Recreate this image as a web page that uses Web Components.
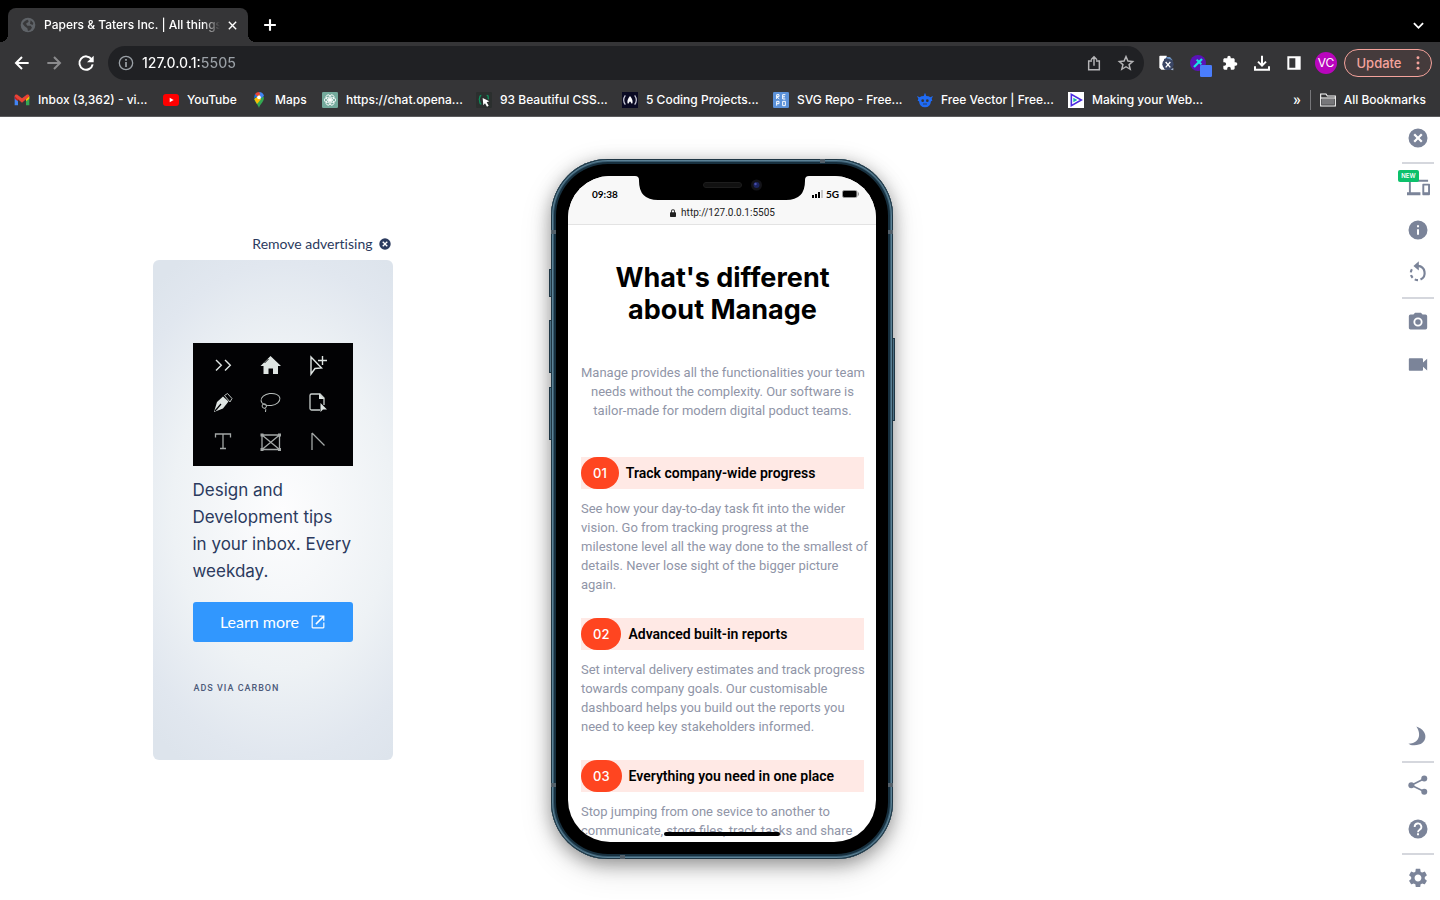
<!DOCTYPE html>
<html lang="en">
<head>
<meta charset="utf-8">
<meta name="viewport" content="width=device-width, initial-scale=1">
<title>Papers &amp; Taters Inc. | All things</title>
<style>
  html, body { margin: 0; }
  body { font-family: Inter, "Liberation Sans", sans-serif; background: #fff; }
</style>
</head>
<body>
<browser-window></browser-window>
<script>
const define = (name, html, init) => {
  const template = document.createElement('template');
  template.innerHTML = html;
  customElements.define(name, class extends HTMLElement {
    constructor() {
      super();
      this.attachShadow({ mode: 'open' }).append(template.content.cloneNode(true));
    }
    connectedCallback() { if (init) init.call(this, this.shadowRoot); }
  });
};

const ICONS = {
  globe: '<circle cx="12" cy="12" r="11" fill="#5f6368"/><path fill="#38383a" d="M4 10c2-4 6-6 8-6l1 3-4 3 2 3 5 0 2 3-3 4-3 1-1-4-4-3zM16 5l4 4-1 3-4-2z"/>',
  x: '<path d="M4 4l16 16M20 4L4 20" fill="none" stroke="currentColor" stroke-width="3"/>',
  plus: '<path d="M12 2v20M2 12h20" fill="none" stroke="currentColor" stroke-width="3.6"/>',
  chevron: '<path d="M2 7l10 10 10-10" fill="none" stroke="currentColor" stroke-width="4"/>',
  back: '<path d="M22 12H4M12 3l-9 9 9 9" fill="none" stroke="currentColor" stroke-width="3"/>',
  forward: '<path d="M2 12h18M12 3l9 9-9 9" fill="none" stroke="currentColor" stroke-width="3"/>',
  reload: '<path d="M20.500 6.500A10 10 0 1 0 22 14" fill="none" stroke="currentColor" stroke-width="3"/><path fill="currentColor" d="M23.500 1v10H13.500z"/>',
  siteinfo: '<circle cx="12" cy="12" r="10" fill="none" stroke="currentColor" stroke-width="2"/><path fill="currentColor" d="M10.700 10.500h2.600V18h-2.600zM10.700 6h2.600v2.600h-2.600z"/>',
  upload: '<path d="M9 9H4v13h16V9h-5M12 16V3M7.500 7L12 2.500 16.500 7" fill="none" stroke="currentColor" stroke-width="2.200"/>',
  star: '<path d="M12 2.500l2.900 6.600 7.100.6-5.400 4.700 1.700 7L12 17.600 5.700 21.400l1.700-7L2 9.700l7.100-.6z" fill="none" stroke="currentColor" stroke-width="2.200"/>',
  docx: '<path fill="#fff" d="M3 1h10v21H5l-3-3V2z"/><path fill="#6c93c4" d="M12 3l6 0 4 5-3 2h-8z"/><path fill="#3a4665" d="M9 6l5-2v3l7 1v14H10z"/><circle cx="15" cy="14" r="8.500" fill="#3a4665"/><path fill="#9fb0cc" d="M19 22l4-3v4z"/><path d="M11.500 10.500l7 8M18.500 10.500l-7 8" stroke="#fff" stroke-width="2"/>',
  picker: '<circle cx="12" cy="12" r="12" fill="#5a12b8"/><path d="M6 18L18 6" stroke="#19e3e3" stroke-width="3.500"/><path d="M10 7l7 7" stroke="#19e3e3" stroke-width="3"/><rect x="15" y="15" width="18" height="18" rx="2" fill="#4a7dfb"/>',
  puzzle: '<path fill="currentColor" d="M20.500 11H19V7c0-1.100-.9-2-2-2h-4V3.500a2.500 2.500 0 0 0-5 0V5H4c-1.100 0-2 .9-2 2v3.800h1.500a2.700 2.700 0 0 1 0 5.400H2V20c0 1.100.9 2 2 2h3.800v-1.500a2.700 2.700 0 0 1 5.400 0V22H17c1.100 0 2-.9 2-2v-4h1.500a2.500 2.500 0 0 0 0-5z"/>',
  download: '<path d="M12 1v15M6 10l6 6 6-6M1.500 17v5h21v-5" fill="none" stroke="currentColor" stroke-width="3"/>',
  panel: '<path fill="currentColor" d="M2 2h20v20H2zM5 5v14h9V5z" fill-rule="evenodd"/>',
  dots: '<circle cx="12" cy="4" r="2.200" fill="currentColor"/><circle cx="12" cy="12" r="2.200" fill="currentColor"/><circle cx="12" cy="20" r="2.200" fill="currentColor"/>',
  gmail: '<path fill="#4285f4" d="M1 6v14h5V10z"/><path fill="#34a853" d="M23 6v14h-5V10z"/><path fill="#c5221f" d="M1 6l5 4v4l-5-4z"/><path fill="#fbbc04" d="M23 6l-5 4v4l5-4z"/><path fill="#ea4335" d="M1 6.500C1 4 3.500 3 5.500 4.500L12 9.500l6.500-5C20.500 3 23 4 23 6.500L18 11l-6 5-6-5z"/>',
  youtube: '<rect x="0" y="3" width="24" height="18" rx="4.500" fill="#f00"/><path d="M10 8.500v7l6-3.500z" fill="#fff"/>',
  maps: '<path fill="#34a853" d="M12 24c-1-5-7-8-7-15l14-2c2 7-6 11-7 17z"/><path fill="#fbbc04" d="M5 11l9-9 1 9-6 7z"/><path fill="#4285f4" d="M12 0a8 8 0 0 1 7.500 6L14 10z"/><path fill="#ea4335" d="M6 3a8 8 0 0 1 6-3l2 3-6 5z"/><path fill="#1a73e8" d="M6 3L4.500 9 10 7z"/><circle cx="12" cy="8" r="2.800" fill="#fff"/>',
  gpt: '<rect width="24" height="24" rx="2" fill="#74aa9c"/><g fill="none" stroke="#fff" stroke-width="1.300"><ellipse cx="12" cy="8" rx="3.500" ry="4.500" transform="rotate(30 12 12)"/><ellipse cx="12" cy="8" rx="3.500" ry="4.500" transform="rotate(90 12 12)"/><ellipse cx="12" cy="8" rx="3.500" ry="4.500" transform="rotate(150 12 12)"/><ellipse cx="12" cy="8" rx="3.500" ry="4.500" transform="rotate(210 12 12)"/><ellipse cx="12" cy="8" rx="3.500" ry="4.500" transform="rotate(270 12 12)"/><ellipse cx="12" cy="8" rx="3.500" ry="4.500" transform="rotate(330 12 12)"/></g>',
  cursor: '<rect width="24" height="24" rx="2" fill="#2b2f2e"/><path d="M8 5c-4 0-1 6-4 6 3 0 0 7 4 7M16 5c4 0 1 4 3 6" fill="none" stroke="#0f8f5c" stroke-width="2"/><path fill="#fff" d="M10 9l10 5-4 1.500 3 5-2.500 1.500-3-5-2.500 3z"/>',
  fcc: '<rect width="24" height="24" fill="#0a0a23"/><path d="M5 5q-5 7 0 14M19 5q5 7 0 14" fill="none" stroke="#c9c9d8" stroke-width="1.800"/><path d="M12 6q6 7 3 12l-3-4-3 4q-3-5 3-12z" fill="#fff"/>',
  repo: '<rect width="24" height="24" rx="2" fill="#5b91d8"/><g fill="none" stroke="#fff" stroke-width="1.500"><path d="M5.500 10.500V4H9v3H5.500l4 3.500M18.500 4h-4v6.500h4M14.500 7.200h3.500M5.500 20.500V14H9v3.500H5.500M14.500 14h4v6.500h-4z"/></g>',
  freepik: '<path fill="#1f6bf5" d="M12 1l2 5q4 0 6 2l4-2-2 4 1 3-2 1q-1 9-9 9t-9-9l-2-1 1-3-2-4 4 2q2-2 6-2z"/><circle cx="8.500" cy="13" r="2" fill="#353537"/><circle cx="15.500" cy="13" r="2" fill="#353537"/><path d="M9 18h6" stroke="#353537" stroke-width="1.200"/>',
  play: '<rect width="24" height="24" fill="#fff"/><path d="M5 3.500v17L20 12z" fill="none" stroke="#4b2be0" stroke-width="2.400"/><path d="M8 8.500v7l6-3.500z" fill="#19b8a8"/>',
  folder: '<path d="M1 21V3h8l2 3h12v15z" fill="none" stroke="currentColor" stroke-width="1.600"/><path fill="#77777a" d="M3 10h18v9H3z"/><path d="M1 9h22" stroke="currentColor" stroke-width="1.600"/>',
  closeCircle: '<path fill="currentColor" d="M12 .6a11.400 11.400 0 1 0 0 22.800 11.400 11.400 0 0 0 0-22.800zm5.500 15L15.600 17.500 12 13.900 8.400 17.500 6.500 15.600 10.100 12 6.500 8.400 8.400 6.500 12 10.100 15.600 6.500 17.500 8.400 13.900 12z"/>',
  devices: '<path fill="currentColor" d="M4 6h18V4H4c-1.100 0-2 .9-2 2v11H0v3h14v-3H4V6zm19 2h-6c-.6 0-1 .5-1 1v10c0 .6.500 1 1 1h6c.6 0 1-.4 1-1V9c0-.5-.4-1-1-1zm-1 9h-4v-7h4v7z"/>',
  info: '<path fill="currentColor" d="M12 .6a11.400 11.400 0 1 0 0 22.800 11.400 11.400 0 0 0 0-22.800zm1.200 17h-2.400V11h2.400v6.600zm0-8.800h-2.400V6.400h2.400v2.400z"/>',
  rotate: '<path d="M11 3.500h1a8.500 8.500 0 0 1 3 16.200" fill="none" stroke="currentColor" stroke-width="2.600"/><path d="M12 20.500A8.500 8.500 0 0 1 5 7" fill="none" stroke="currentColor" stroke-width="2.600" stroke-dasharray="4 3"/><path fill="currentColor" d="M13 -2v11L6.500 3.500z"/>',
  camera: '<path fill="currentColor" d="M8.500 1L6.500 3H3a2 2 0 0 0-2 2v14c0 1.100.9 2 2 2h18a2 2 0 0 0 2-2V5a2 2 0 0 0-2-2h-3.500l-2-2z"/><circle cx="12" cy="12" r="4.400" fill="none" stroke="#fff" stroke-width="2.200"/>',
  video: '<path fill="currentColor" d="M18 9V5c0-.6-.5-1-1-1H2c-.6 0-1 .4-1 1v13c0 .6.400 1 1 1h15c.6 0 1-.4 1-1v-4l5 4.500v-14z"/>',
  moon: '<path fill="currentColor" d="M10 -.5c16 5 14 23-3 22.500-3 0-5-1-6.500-2 13 0 16-11 9.500-20.500z"/>',
  share: '<path d="M20 3L4 11l16 8" fill="none" stroke="currentColor" stroke-width="2"/><circle cx="19.500" cy="3" r="3.600" fill="currentColor"/><circle cx="4" cy="11" r="3.600" fill="currentColor"/><circle cx="19.500" cy="19" r="3.600" fill="currentColor"/>',
  help: '<circle cx="12" cy="12" r="11.400" fill="currentColor"/><path d="M8 9.500a4 4 0 1 1 6 3.300c-1.500 1-2 1.500-2 3" fill="none" stroke="#fff" stroke-width="2.200"/><path fill="#fff" d="M10.800 17.200h2.400v2.400h-2.400z"/>',
  gear: '<path transform="translate(-1.700 -1.700) scale(1.140)" fill="currentColor" d="M19.140 12.940c.04-.3.060-.61.060-.94 0-.32-.02-.64-.07-.94l2.030-1.580c.18-.14.230-.41.120-.61l-1.920-3.320c-.12-.22-.37-.29-.59-.22l-2.390.96c-.5-.38-1.030-.7-1.620-.94l-.36-2.540c-.04-.24-.24-.41-.48-.41h-3.840c-.24 0-.43.170-.47.410l-.36 2.540c-.59.240-1.130.570-1.620.940l-2.390-.96c-.22-.08-.47 0-.59.220L2.740 8.870c-.12.210-.08.470.12.610l2.030 1.580c-.05.300-.09.630-.09.940s.02.640.070.940l-2.030 1.580c-.18.140-.23.410-.12.610l1.920 3.320c.12.220.370.290.590.220l2.390-.96c.500.380 1.030.700 1.620.940l.36 2.540c.050.240.240.410.480.410h3.840c.24 0 .44-.17.470-.41l.36-2.540c.59-.24 1.130-.56 1.620-.94l2.390.96c.22.080.470 0 .59-.22l1.920-3.320c.12-.22.070-.47-.12-.61l-2.010-1.580zM12 15.600c-1.980 0-3.600-1.620-3.600-3.600s1.620-3.600 3.600-3.600 3.600 1.620 3.600 3.600-1.620 3.600-3.600 3.600z"/>',
  external: '<path fill="currentColor" d="M21 21H3V3h8V1H3a2 2 0 0 0-2 2v18c0 1.100.9 2 2 2h18a2 2 0 0 0 2-2v-8h-2v8zM14 1v2.200h5L7.500 14.700l1.800 1.800L20.800 5v5H23V1z"/>',
  lock: '<path fill="currentColor" d="M19 10h-1V7A6 6 0 0 0 6 7v3H5a2 2 0 0 0-2 2v10c0 1.100.9 2 2 2h14a2 2 0 0 0 2-2V12a2 2 0 0 0-2-2zM8.500 10V7a3.500 3.500 0 0 1 7 0v3z"/>'
};

define('ui-icon', `
<style>
  :host { display: inline-flex; flex: none; width: var(--icon-size, 16px); height: var(--icon-size, 16px); }
  svg { display: block; width: 100%; height: 100%; overflow: visible; }
</style>
<svg viewBox="0 0 24 24" aria-hidden="true"></svg>`, function (root) {
  root.querySelector('svg').innerHTML = ICONS[this.getAttribute('name')] || '';
});

define('tab-strip', `
<style>
  :host { display: flex; align-items: flex-end; height: 42px; padding: 0 14px 0 8px; box-sizing: border-box; background: #000; color: #fff; }
  .tab { position: relative; display: flex; align-items: center; gap: 8px; box-sizing: border-box; width: 240px; height: 34px; padding: 0 8px 0 12px; background: #353537; border-radius: 8px 8px 0 0; }
  .tab::before, .tab::after { content: ""; position: absolute; bottom: 0; width: 8px; height: 8px; }
  .tab::before { right: 100%; background: radial-gradient(circle at 0 0, #000 8px, #353537 8px); }
  .tab::after { left: 100%; background: radial-gradient(circle at 100% 0, #000 8px, #353537 8px); }
  .title { flex: 1; min-width: 0; overflow: hidden; white-space: nowrap; font: 500 12px/18px Inter, sans-serif; -webkit-mask-image: linear-gradient(90deg, #000 90%, transparent); mask-image: linear-gradient(90deg, #000 90%, transparent); }
  button { display: flex; align-items: center; justify-content: center; width: 16px; height: 34px; padding: 0; border: 0; background: none; color: #fff; }
  .close { --icon-size: 11px; margin-left: -4px; }
  .new { margin-left: 14px; --icon-size: 14px; }
  .list { margin-left: auto; --icon-size: 11px; }
</style>
<div class="tab"><ui-icon name="globe"></ui-icon><span class="title"><slot></slot></span><button class="close" aria-label="Close tab"><ui-icon name="x"></ui-icon></button></div>
<button class="new" aria-label="New tab"><ui-icon name="plus"></ui-icon></button>
<button class="list" aria-label="Search tabs"><ui-icon name="chevron"></ui-icon></button>`);

define('address-bar', `
<style>
  :host { display: flex; align-items: center; height: 42px; padding: 0 8px; box-sizing: border-box; background: #353537; color: #fff; }
  nav, .actions { display: flex; align-items: center; flex: none; }
  nav button, .actions button { display: flex; align-items: center; justify-content: center; padding: 0; border: 0; background: none; color: inherit; width: 32px; height: 32px; }
  nav { margin-left: -2px; margin-right: 6px; }
  .dim { color: #8b8b8d; }
  form { flex: 1; min-width: 0; display: flex; align-items: center; gap: 8px; height: 34px; padding: 0 10px; border-radius: 17px; background: #202124; color: #9aa0a6; }
  form button { display: flex; padding: 0; border: 0; background: none; color: #b5b5b7; }
  form button + button { margin-left: 8px; }
  input { flex: 1; min-width: 0; padding: 0; border: 0; outline: 0; font: 500 14px/20px Inter, sans-serif; background: linear-gradient(90deg, #fff 58px, #9aa0a6 58px); -webkit-background-clip: text; background-clip: text; color: transparent; }
  .actions { margin-left: 6px; }
  .avatar { width: 22px; height: 22px; margin: 0 7px 0 5px; border-radius: 50%; background: #b905bd; text-align: center; font: 400 12px/22px Inter, sans-serif; }
  .actions .update { width: 88px; height: 28px; border: 1px solid #f5a39c; border-radius: 14px; background: #453b3c; color: #f5a39c; gap: 8px; font: 500 13px/20px Inter, sans-serif; padding-left: 6px; }
</style>
<nav aria-label="History">
  <button aria-label="Back"><ui-icon name="back"></ui-icon></button>
  <button class="dim" aria-label="Forward"><ui-icon name="forward"></ui-icon></button>
  <button aria-label="Reload"><ui-icon name="reload"></ui-icon></button>
</nav>
<form onsubmit="return false">
  <ui-icon name="siteinfo"></ui-icon>
  <input type="text" aria-label="Address" value="127.0.0.1:5505">
  <button type="button" aria-label="Share page"><ui-icon name="upload"></ui-icon></button>
  <button type="button" aria-label="Bookmark page"><ui-icon name="star"></ui-icon></button>
</form>
<div class="actions">
  <button aria-label="Inspector"><ui-icon name="docx"></ui-icon></button>
  <button aria-label="Color picker"><ui-icon name="picker"></ui-icon></button>
  <button aria-label="Extensions"><ui-icon name="puzzle"></ui-icon></button>
  <button aria-label="Downloads"><ui-icon name="download"></ui-icon></button>
  <button aria-label="Side panel"><ui-icon name="panel"></ui-icon></button>
  <span class="avatar">VC</span>
  <button class="update">Update <ui-icon name="dots"></ui-icon></button>
</div>`);

define('bookmark-link', `
<style>
  :host { display: block; min-width: 0; }
  a { display: flex; align-items: center; gap: 8px; color: #fff; text-decoration: none; white-space: nowrap; font: 500 12px/20px Inter, sans-serif; }
</style>
<a href="#"><ui-icon></ui-icon><span><slot></slot></span></a>`, function (root) {
  const icon = document.createElement('ui-icon');
  icon.setAttribute('name', this.getAttribute('icon'));
  root.querySelector('ui-icon').replaceWith(icon);
});

define('bookmark-bar', `
<style>
  :host { display: flex; align-items: center; justify-content: space-between; box-sizing: border-box; height: 33px; padding: 0 14px; background: #353537; border-bottom: 1px solid #5b5b5d; color: #fff; }
  nav { display: grid; grid-template-columns: 149px 88px 71px 154px 146px 151px 144px 151px auto; }
  .more { display: flex; align-items: center; }
  button { padding: 0 9px; border: 0; background: none; color: #fff; font: 500 16px/20px Roboto, sans-serif; }
  .all { border-left: 1px solid #77777a; padding-left: 9px; }
</style>
<nav aria-label="Bookmarks">
  <bookmark-link icon="gmail">Inbox (3,362) - vi...</bookmark-link>
  <bookmark-link icon="youtube">YouTube</bookmark-link>
  <bookmark-link icon="maps">Maps</bookmark-link>
  <bookmark-link icon="gpt">https://chat.opena...</bookmark-link>
  <bookmark-link icon="cursor">93 Beautiful CSS...</bookmark-link>
  <bookmark-link icon="fcc">5 Coding Projects...</bookmark-link>
  <bookmark-link icon="repo">SVG Repo - Free...</bookmark-link>
  <bookmark-link icon="freepik">Free Vector | Free...</bookmark-link>
  <bookmark-link icon="play">Making your Web...</bookmark-link>
</nav>
<div class="more"><button aria-label="More bookmarks">»</button><bookmark-link class="all" icon="folder">All Bookmarks</bookmark-link></div>`);

define('ad-panel', `
<style>
  :host { display: flex; flex-direction: column; gap: 6px; width: 240px; color: #2b3a5e; }
  .remove { display: flex; align-items: center; justify-content: flex-end; gap: 6px; padding: 0 2px 0 0; border: 0; background: none; color: inherit; font: 400 14px/20px Lato, sans-serif; font-variant-ligatures: none; --icon-size: 12px; }
  article { box-sizing: border-box; height: 500px; padding: 83px 40px 0; border-radius: 6px; background: radial-gradient(ellipse 200px 290px at 54% 50%, #fdfdfe 0%, #eef2f5 55%, #e1e7ef 85%, #dde4ec 100%); }
  .art { display: block; width: 100%; background: #020204; }
  p { margin: 11px 0 17px; font: 400 17px/27px Inter, sans-serif; white-space: nowrap; }
  .cta { display: flex; align-items: center; justify-content: center; gap: 12px; height: 40px; border-radius: 3px; background: #3197fe; color: #fff; text-decoration: none; font: 400 16px/20px Lato, sans-serif; --icon-size: 14px; }
  small { display: block; margin-top: 36px; padding-left: 1px; font: 500 9px/20px Roboto, sans-serif; letter-spacing: 1px; color: #4d5a7a; }
</style>
<button class="remove">Remove advertising <ui-icon name="closeCircle"></ui-icon></button>
<article>
  <svg class="art" viewBox="0 0 160 123" role="img" aria-label="Design tool icons">
    <g fill="none" stroke="#dfe5e3" stroke-width="1.400">
      <path d="M23 17l5.300 5.300L23 27.600M32 17l5.300 5.300L32 27.600"/>
      <path d="M118 14v17l4-5.500 6.500-.5zM129.500 13v9M125 17.500h9"/>
    </g>
    <path fill="#dfe5e3" d="M77.500 13l10.500 10h-3v8h-5v-5.500h-4.500V31h-5v-8h-3z"/>
    <path d="M71.500 20l4-4" stroke="#020204" stroke-width="1"/>
    <path fill="#dfe5e3" d="M21 69l3-10 6-5.500 5.500 5-5.500 7z"/><path d="M22 68l6-7" stroke="#020204" stroke-width="1.200"/>
    <path d="M31.500 52.500l3-2 4.500 5-2 3.500z" fill="none" stroke="#b9bfbd"/>
    <g fill="none" stroke="#b9bfbd"><ellipse cx="77.500" cy="56.500" rx="9.500" ry="6" transform="rotate(-8 77.500 56.500)"/><circle cx="71.300" cy="63" r="2.200"/><path d="M71.500 65q2 1 1 4"/></g>
    <path d="M127 67h-8.500q-1.500 0-1.500-1.500v-13q0-1.500 1.500-1.500h8.500l4 4v7" fill="none" stroke="#c9cfcd" stroke-width="1.300"/>
    <path fill="#dfe5e3" d="M126 50.500v5.500h5.500zM127.500 60v9l2.500-2.500h4z"/>
    <g fill="none" stroke="#a4a8a7" stroke-width="1.300"><path d="M22.500 94.500V91h15v3.500M30 91v14.500M27 105.500h6"/><path d="M69 92h17.500v14.500H69zM69 92l17.500 14.500M86.500 92L69 106.500"/><path d="M119 90v17M119 90l12.500 12.500"/></g>
    <g fill="#a4a8a7"><path d="M67.500 90.500h3v3h-3zM85 90.500h3v3h-3zM67.500 105h3v3h-3zM85 105h3v3h-3z"/></g>
  </svg>
  <p>Design and<br>Development tips<br>in your inbox. Every<br>weekday.</p>
  <a class="cta" href="#">Learn more <ui-icon name="external"></ui-icon></a>
  <small>ADS VIA CARBON</small>
</article>`);

define('feature-item', `
<style>
  :host { display: block; margin-bottom: 24px; }
  h2 { display: flex; align-items: center; gap: 7px; margin: 0 0 10px; background: #ffe9e5; color: #000; font: 600 14px/32px Roboto, sans-serif; white-space: nowrap; }
  .n { padding: 0 12px; border-radius: 16px; background: #ff4520; color: #fff; text-align: center; font: 500 13px/32px Inter, sans-serif; }
  p { margin: 0; font: 400 13px/19px Roboto, sans-serif; color: #9095a7; white-space: nowrap; }
</style>
<h2><span class="n"></span><span class="t"></span></h2><p><slot></slot></p>`, function (root) {
  root.querySelector('.n').textContent = this.getAttribute('number');
  root.querySelector('.t').textContent = this.getAttribute('heading');
});

define('phone-frame', `
<style>
  :host { position: relative; display: block; box-sizing: border-box; width: 342px; height: 700px; padding: 17px; border-radius: 57px; background: #000;
    box-shadow: inset 0 0 0 1px #1f3644, inset 0 0 0 2px #5c8296, inset 0 0 0 3px #3a5c70, inset 0 0 0 5px #17303f, 0 5px 18px rgba(0,0,0,.38), 0 10px 34px rgba(0,0,0,.12); }
  .screen { position: relative; height: 666px; overflow: hidden; border-radius: 42px; background: #fff; }
  header { box-sizing: border-box; height: 49px; padding-top: 9px; background: #f8f8f8; border-bottom: 1px solid #e3e3e3; color: #000; }
  .status { display: flex; justify-content: space-between; padding: 0 17px 0 24px; font: 700 10px/18px Lato, sans-serif; }
  .net { display: flex; align-items: center; gap: 3px; }
  .net svg { display: block; }
  .url { display: flex; justify-content: center; align-items: center; gap: 4px; font: 400 10px/20px Roboto, sans-serif; color: #222; --icon-size: 8px; }
  .notch { position: absolute; top: 0; left: 71px; width: 166px; height: 24px; display: block; overflow: visible; }
  .home { position: absolute; left: 96px; bottom: 6px; width: 116px; height: 4px; border-radius: 2px; background: #000; }
  .page { padding: 37px 12px 0 13px; }
  i { position: absolute; background: #4b7084; border: 1px solid #1f3644; box-sizing: border-box; width: 3px; }
  b { position: absolute; background: #53606a; width: 5px; height: 4px; }
</style>
<i style="left:-2px;top:110px;height:28px"></i><i style="left:-2px;top:161px;height:53px"></i><i style="left:-2px;top:228px;height:53px"></i><i style="right:-2px;top:179px;height:83px"></i>
<b style="left:0;top:71px"></b><b style="right:0;top:71px"></b><b style="left:0;top:624px"></b><b style="right:0;top:624px"></b><b style="left:269px;top:0"></b><b style="left:69px;bottom:0"></b>
<div class="screen">
  <header>
    <div class="status"><span>09:38</span><span class="net">
      <svg width="11" height="8" viewBox="0 0 11 8" aria-hidden="true"><path d="M0 5h2v3H0zM3 4h2v4H3zM6 2h2v6H6z"/><path fill="#c9c9c9" d="M9 0h2v8H9z"/></svg>
      <span>5G</span>
      <svg width="17" height="8" viewBox="0 0 17 8" aria-hidden="true"><rect x=".5" y=".5" width="14.500" height="7" rx="1.500" fill="none" stroke="#999"/><rect x="1" y="1" width="13.500" height="6" rx="1"/><path fill="#999" d="M16 2.500h1v3h-1z"/></svg>
    </span></div>
    <div class="url"><ui-icon name="lock"></ui-icon><span>http://127.0.0.1:5505</span></div>
  </header>
  <div class="page"><slot></slot></div>
  <svg class="notch" viewBox="0 0 166 24" aria-hidden="true"><path d="M-4 0Q0 0 0 4v1q0 19 19 19h128q19 0 19-19V4q0-4 4-4z"/><rect x="64.500" y="6.500" width="38" height="5" rx="2.500" fill="#111" stroke="#1d1d1d"/><circle cx="117.500" cy="9" r="5.500" fill="#131318"/><circle cx="117.500" cy="9" r="3" fill="#1c2560"/><circle cx="116.500" cy="8" r="1.200" fill="#4a4fae"/></svg>
  <div class="home"></div>
</div>`);

define('manage-page', `
<style>
  :host { display: block; }
  h1 { margin: 0 0 37px; text-align: center; font: 700 27px/32px Inter, sans-serif; color: #000; }
  .intro { margin: 0 0 37px; text-align: center; font: 400 13px/19px Roboto, sans-serif; color: #9095a7; white-space: nowrap; }
</style>
<h1>What's different<br>about Manage</h1>
<p class="intro">Manage provides all the functionalities your team<br>needs without the complexity. Our software is<br>tailor-made for modern digital poduct teams.</p>
<feature-item number="01" heading="Track company-wide progress">See how your day-to-day task fit into the wider<br>vision. Go from tracking progress at the<br>milestone level all the way done to the smallest of<br>details. Never lose sight of the bigger picture<br>again.</feature-item>
<feature-item number="02" heading="Advanced built-in reports">Set interval delivery estimates and track progress<br>towards company goals. Our customisable<br>dashboard helps you build out the reports you<br>need to keep key stakeholders informed.</feature-item>
<feature-item number="03" heading="Everything you need in one place">Stop jumping from one sevice to another to<br>communicate, store files, track tasks and share</feature-item>`);

define('tool-rail', `
<style>
  :host { display: flex; flex-direction: column; justify-content: space-between; box-sizing: border-box; width: 44px; padding: 11px 6px 12px; --icon-size: 20px; color: #7b8499; }
  div { display: flex; flex-direction: column; align-items: center; }
  button { position: relative; display: flex; padding: 0; border: 0; background: none; color: inherit; }
  button + button { margin-top: 23px; }
  hr { width: 100%; height: 2px; margin: 14px 0 13px; border: 0; background: #d5d7dd; }
  .devices { --icon-size: 23px; height: 20px; align-items: center; }
  .badge { position: absolute; right: 11px; top: -7px; padding: 0 3px; border-radius: 2px; background: #0cc16b; color: #fff; font: 600 6px/12px Inter, sans-serif; }
</style>
<div>
  <button aria-label="Close"><ui-icon name="closeCircle"></ui-icon></button><hr>
  <button class="devices" aria-label="Devices"><ui-icon name="devices"></ui-icon><span class="badge">NEW</span></button>
  <button aria-label="Information"><ui-icon name="info"></ui-icon></button>
  <button aria-label="Rotate"><ui-icon name="rotate"></ui-icon></button><hr>
  <button aria-label="Screenshot"><ui-icon name="camera"></ui-icon></button>
  <button aria-label="Record video"><ui-icon name="video"></ui-icon></button>
</div>
<div>
  <button aria-label="Dark mode"><ui-icon name="moon"></ui-icon></button><hr>
  <button aria-label="Share"><ui-icon name="share"></ui-icon></button>
  <button aria-label="Help"><ui-icon name="help"></ui-icon></button><hr>
  <button aria-label="Settings"><ui-icon name="gear"></ui-icon></button>
</div>`);

define('browser-window', `
<style>
  :host { display: flex; flex-direction: column; min-height: 100vh; }
  main { flex: 1; display: grid; grid-template-columns: 1fr auto 1fr; align-items: center; padding-left: 4px; }
  ad-panel { justify-self: center; margin-right: 10px; margin-bottom: 24px; }
  tool-rail { align-self: stretch; justify-self: end; }
</style>
<tab-strip>Papers &amp; Taters Inc. | All things</tab-strip>
<address-bar></address-bar>
<bookmark-bar></bookmark-bar>
<main>
  <ad-panel></ad-panel>
  <phone-frame><manage-page></manage-page></phone-frame>
  <tool-rail></tool-rail>
</main>`);
</script>
</body>
</html>
